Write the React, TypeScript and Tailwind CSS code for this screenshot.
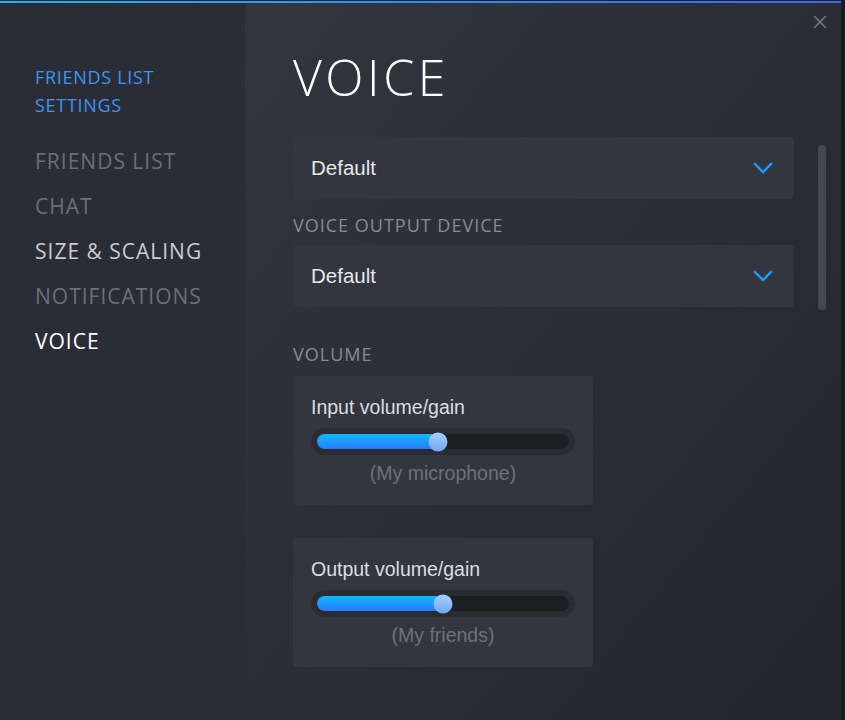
import { X } from 'lucide-react'

const sideFont = { fontFamily: '"Open Sans", "Noto Sans", sans-serif' }

function Chevron() {
  return (
    <svg width="20" height="12" viewBox="0 0 20 12" fill="none">
      <path d="M2 2 L10 10 L18 2" stroke="#1a9fff" strokeWidth="2.4" strokeLinecap="square" />
    </svg>
  )
}

function Dropdown({ value }: { value: string }) {
  return (
    <div className="h-[62px] w-full rounded-[3px] bg-[#33363e] flex items-center justify-between pl-[18px] pr-[21px]">
      <span className="text-[20.5px] text-[#e6e7ea] font-[Liberation_Sans,Arial,sans-serif]">{value}</span>
      <Chevron />
    </div>
  )
}

function VolumeCard({ label, caption, pct }: { label: string; caption: string; pct: number }) {
  return (
    <div className="w-[300px] h-[129px] rounded-[3px] bg-[#33363e] px-[18px] pt-[19px] font-[Liberation_Sans,Arial,sans-serif]">
      <div className="text-[19.5px] leading-[24px] text-[#dcdde0]">{label}</div>
      <div className="mt-[9px] h-[27px] w-[264px] rounded-full bg-[#2a2c32] px-[6px] flex items-center">
        <div className="relative h-[15px] w-full rounded-full bg-[#1d1e22]">
          <div
            className="absolute left-0 top-0 h-full rounded-full bg-gradient-to-b from-[#10b9ff] to-[#2a78ff]"
            style={{ width: `${pct}%` }}
          />
          <div
            className="absolute top-1/2 -translate-y-1/2 -translate-x-1/2 h-[19px] w-[19px] rounded-full bg-gradient-to-b from-[#a8d0ff] to-[#6fa6f4]"
            style={{ left: `${pct}%` }}
          />
        </div>
      </div>
      <div className="mt-[6px] text-center text-[19.5px] leading-[24px] text-[#6e7178]">{caption}</div>
    </div>
  )
}

export default function App() {
  const navItems = [
    { label: 'FRIENDS LIST', color: 'text-[#6d6f74]' },
    { label: 'CHAT', color: 'text-[#6d6f74]' },
    { label: 'SIZE & SCALING', color: 'text-[#c9cbd0]' },
    { label: 'NOTIFICATIONS', color: 'text-[#6d6f74]' },
    { label: 'VOICE', color: 'text-white' },
  ]

  return (
    <div className="w-[845px] h-[720px] flex bg-[#1c1e23] overflow-hidden" style={sideFont}>
      <div className="flex-1 flex flex-col">
        {/* top accent */}
        <div className="h-[1px] bg-[#1f2126]" />
        <div className="h-[2px] bg-gradient-to-r from-[#18b6f6] to-[#3c66f0]" />

        <div className="flex flex-1">
          {/* sidebar */}
          <div className="w-[245px] bg-[#2a2d35] pl-[35px] pt-[60px]">
            <div className="text-[18px] leading-[28px] text-[#3d95f5] tracking-[0.7px]">
              FRIENDS LIST
              <br />
              SETTINGS
            </div>
            <div className="mt-[28px] flex flex-col gap-[17px]">
              {navItems.map(item => (
                <div key={item.label} className={`text-[21px] leading-[28px] tracking-[1px] ${item.color}`}>
                  {item.label}
                </div>
              ))}
            </div>
          </div>

          {/* main */}
          <div className="relative flex-1 flex bg-gradient-to-br from-[#33363e] via-[#2a2d34] to-[#23262d] pl-[48px]">
            <button className="absolute right-[10px] top-[8px] text-[#6f7c85]">
              <X size={22} strokeWidth={1.6} />
            </button>

            <div className="w-[501px] pt-[49px]">
              <h1 className="text-[50px] leading-[50px] font-light tracking-[3.5px] text-white">VOICE</h1>

              <div className="mt-[35px]">
                <Dropdown value="Default" />
              </div>

              <div className="mt-[16px] text-[18px] leading-[20px] tracking-[1px] text-[#898b90]">VOICE OUTPUT DEVICE</div>
              <div className="mt-[10px]">
                <Dropdown value="Default" />
              </div>

              <div className="mt-[37px] text-[18px] leading-[20px] tracking-[1px] text-[#898b90]">VOLUME</div>
              <div className="mt-[12px]">
                <VolumeCard label="Input volume/gain" caption="(My microphone)" pct={48} />
              </div>
              <div className="mt-[33px]">
                <VolumeCard label="Output volume/gain" caption="(My friends)" pct={50} />
              </div>
            </div>

            {/* scrollbar */}
            <div className="ml-[24px] mt-[142px] w-[8px] h-[165px] rounded-full bg-[#454852]" />
          </div>
        </div>
      </div>
      <div className="w-[4px] bg-[#1b1c20]" />
    </div>
  )
}
